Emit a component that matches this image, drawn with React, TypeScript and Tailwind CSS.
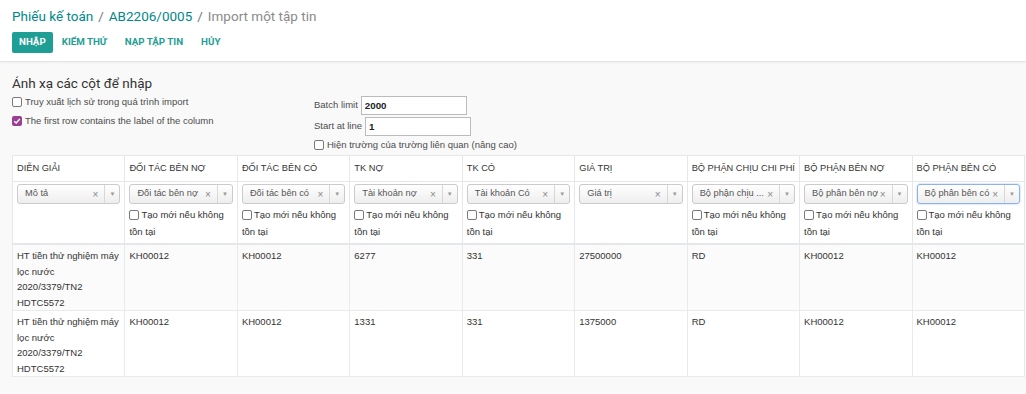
const columns = [
  { label: "Diễn giải", field: "Mô tả", create: false },
  { label: "Đối tác bên nợ", field: "Đối tác bên nợ", create: true },
  { label: "Đối tác bên có", field: "Đối tác bên có", create: true },
  { label: "TK nợ", field: "Tài khoản nợ", create: true },
  { label: "TK có", field: "Tài khoản Có", create: true },
  { label: "Giá trị", field: "Giá trị", create: false },
  { label: "Bộ phận chịu chi phí", field: "Bộ phận chịu ...", create: true },
  { label: "Bộ phận bên nợ", field: "Bộ phân bên nợ", create: true },
  { label: "Bộ phận bên có", field: "Bộ phân bên có", create: true, focused: true },
]

const rows = [
  ["HT tiền thử nghiệm máy lọc nước 2020/3379/TN2 HDTC5572", "KH00012", "KH00012", "6277", "331", "27500000", "RD", "KH00012", "KH00012"],
  ["HT tiền thử nghiệm máy lọc nước 2020/3379/TN2 HDTC5572", "KH00012", "KH00012", "1331", "331", "1375000", "RD", "KH00012", "KH00012"],
]

const Box = ({ checked = false }: { checked?: boolean }) =>
  checked ? (
    <span className="inline-flex h-[10px] w-[10px] shrink-0 items-center justify-center rounded-[2px] bg-[#9b3f93]">
      <svg viewBox="0 0 10 10" className="h-[8px] w-[8px]">
        <path d="M1.5 5.2 4 7.5 8.5 2.5" fill="none" stroke="white" strokeWidth="1.8" />
      </svg>
    </span>
  ) : (
    <span className="inline-block h-[10px] w-[10px] shrink-0 rounded-[2px] border border-[#7a7a7a] bg-white" />
  )

const Select = ({ value, focused }: { value: string; focused?: boolean }) => (
  <div
    className={`flex h-[20px] items-center rounded-[3px] border bg-gradient-to-b from-white to-[#eeeeee] text-[9.25px] text-[#555] ${
      focused ? "border-[#8fb2e6] shadow-[0_0_2px_#9ebfef]" : "border-[#cbcbcb]"
    }`}
  >
    <span className="min-w-0 flex-1 overflow-hidden whitespace-nowrap pl-[7px]">{value}</span>
    <span className="pl-[2px] pr-[6px] text-[10px] text-[#888]">×</span>
    <span className="flex h-full w-[15px] shrink-0 items-center justify-center border-l border-[#d8d8d8] text-[6px] text-[#999]">
      ▼
    </span>
  </div>
)

export default function App() {
  return (
    <div className="h-[394px] w-[1026px] overflow-hidden bg-[#f9f9f9] font-['Liberation_Sans',Arial,sans-serif] text-[#4c4c4c]">
      <div className="border-b border-[#e4e4e4] bg-white px-[12px] pb-[8px] pt-[6px] font-['Roboto',sans-serif] shadow-[0_1px_2px_rgba(0,0,0,0.04)]">
        <div className="text-[13.5px] leading-[20px]">
          <span className="text-[#00888a]">Phiếu kế toán</span>
          <span className="px-[5px] text-[#777]">/</span>
          <span className="text-[#00888a]">AB2206/0005</span>
          <span className="px-[5px] text-[#777]">/</span>
          <span className="text-[#8a8a8a]">Import một tập tin</span>
        </div>
        <div className="mt-[6px] flex items-center text-[9.75px] font-bold">
          <button className="h-[21px] rounded-[2px] bg-[#1e9e95] px-[7px] uppercase text-white">Nhập</button>
          <button className="px-[9px] uppercase text-[#1e9e95]">Kiểm thử</button>
          <button className="px-[9px] uppercase text-[#1e9e95]">Nạp tập tin</button>
          <button className="px-[9px] uppercase text-[#1e9e95]">Hủy</button>
        </div>
      </div>

      <div className="px-[12px] pt-[12px]">
        <div className="flex">
          <div className="w-[302px]">
            <h2 className="font-['Roboto',sans-serif] text-[13.5px] leading-[18px] text-[#333]">
              Ánh xạ các cột để nhập
            </h2>
            <label className="mt-[2px] flex items-center gap-[3px] text-[9.5px] leading-[16px]">
              <Box /> Truy xuất lịch sử trong quá trình import
            </label>
            <label className="mt-[3px] flex items-center gap-[3px] text-[9.5px] leading-[16px]">
              <Box checked /> The first row contains the label of the column
            </label>
          </div>
          <div className="pt-[22px] text-[9.5px]">
            <div className="flex items-center gap-[3px]">
              <span>Batch limit</span>
              <input
                readOnly
                value="2000"
                className="h-[19px] w-[106px] border border-[#bbb] bg-white px-[3px] text-[9.75px] font-bold text-[#222] outline-none"
              />
            </div>
            <div className="mt-[2px] flex items-center gap-[3px]">
              <span>Start at line</span>
              <input
                readOnly
                value="1"
                className="h-[19px] w-[106px] border border-[#bbb] bg-white px-[3px] text-[9.75px] font-bold text-[#222] outline-none"
              />
            </div>
            <label className="mt-[1px] flex items-center gap-[3px] leading-[16px]">
              <Box /> Hiện trường của trường liên quan (nâng cao)
            </label>
          </div>
        </div>

        <table className="mt-[2px] w-[1013px] table-fixed border-collapse text-[9.5px] text-[#333]">
          <thead>
            <tr className="bg-white">
              {columns.map((c) => (
                <th
                  key={c.label}
                  className="h-[26px] border border-[#e5e7eb] px-[4px] text-left text-[9.25px] font-normal uppercase"
                >
                  {c.label}
                </th>
              ))}
            </tr>
            <tr className="bg-white">
              {columns.map((c) => (
                <td
                  key={c.label}
                  className="h-[62px] border border-[#e5e7eb] border-b-2 px-[4px] pb-[3px] pt-[2px] align-top"
                >
                  <Select value={c.field} focused={c.focused} />
                  {c.create && (
                    <div className="mt-[2px] text-[9.5px] leading-[17px]">
                      <div className="flex h-[17px] items-center gap-[2px]">
                        <Box /> Tạo mới nếu không
                      </div>
                      <div>tồn tại</div>
                    </div>
                  )}
                </td>
              ))}
            </tr>
          </thead>
          <tbody>
            {rows.map((r, i) => (
              <tr key={i} className={i === 0 ? "bg-[#fbfbfb]" : "bg-white"}>
                {r.map((cell, j) => (
                  <td
                    key={j}
                    className="h-[65px] border border-[#e9eaec] px-[4px] pt-[3px] align-top leading-[15.5px]"
                  >
                    {cell}
                  </td>
                ))}
              </tr>
            ))}
          </tbody>
        </table>
      </div>
    </div>
  )
}
